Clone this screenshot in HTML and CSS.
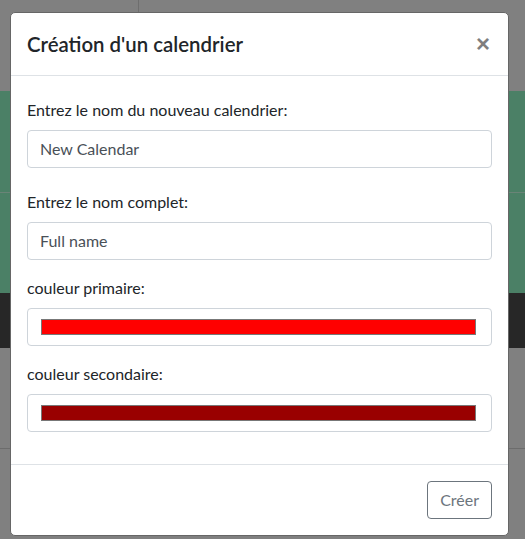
FILE: index.html
```html
<!DOCTYPE html>
<html lang="fr">
<head>
<meta charset="utf-8">
<title>Création d'un calendrier</title>
<link rel="stylesheet" href="styles.css">
</head>
<body>
<div class="page">
  <div class="topbar"><div class="topbar-cell"></div></div>
  <div class="band-green"><div class="green-row"></div><div class="green-row"></div></div>
  <div class="band-dark"></div>
  <div class="band-lower"></div>
</div>

<div class="modal">
  <div class="modal-header">
    <h5 class="modal-title">Création d'un calendrier</h5>
    <button class="close" type="button" aria-label="Close">×</button>
  </div>
  <div class="modal-body">
    <div class="form-group spaced">
      <label class="form-label">Entrez le nom du nouveau calendrier:</label>
      <div class="form-control">New Calendar</div>
    </div>
    <div class="form-group spaced">
      <label class="form-label">Entrez le nom complet:</label>
      <div class="form-control">Full name</div>
    </div>
    <div class="form-group">
      <label class="form-label">couleur primaire:</label>
      <div class="form-control color-control"><span class="swatch swatch-primary"></span></div>
    </div>
    <div class="form-group">
      <label class="form-label">couleur secondaire:</label>
      <div class="form-control color-control"><span class="swatch swatch-secondary"></span></div>
    </div>
  </div>
  <div class="modal-footer">
    <button class="btn btn-outline-secondary" type="button">Créer</button>
  </div>
</div>
</body>
</html>
```

FILE: styles.css
```css
* { box-sizing: border-box; }

html, body {
  margin: 0;
  padding: 0;
  width: 525px;
  height: 539px;
  overflow: hidden;
  background: #808080;
  font-family: "Lato", "Open Sans", sans-serif;
}

.page {
  display: flex;
  flex-direction: column;
  height: 539px;
}

.topbar {
  height: 91px;
  background: #808080;
  display: flex;
}
.topbar-cell {
  width: 139px;
  border-right: 1px solid #6e6e6e;
}

.band-green {
  height: 202px;
  background: #4b8066;
  display: flex;
  flex-direction: column;
}
.green-row {
  flex: 1;
}
.green-row + .green-row {
  border-top: 1px solid #6a8477;
}

.band-dark {
  height: 55px;
  background: #272727;
}

.band-lower {
  height: 101px;
  border-bottom: 1px solid #6c6c6c;
  background: #808080;
}

/* modal */
.modal {
  position: absolute;
  left: 10px;
  top: 12px;
  width: 499px;
  background: #fff;
  border: 1px solid #666;
  border-radius: 5px;
  color: #212529;
  display: flex;
  flex-direction: column;
}

.modal-header {
  display: flex;
  align-items: flex-start;
  padding: 16px;
  border-bottom: 1px solid #dee2e6;
}
.modal-title {
  margin: 0;
  font-size: 20.4px;
  font-weight: 600;
  line-height: 30px;
  color: #212529;
}
.close {
  margin-left: auto;
  border: 0;
  background: transparent;
  padding: 0 2px 0 0;
  font-family: "Liberation Sans", sans-serif;
  font-size: 24px;
  font-weight: 700;
  line-height: 30px;
  color: #000;
  opacity: 0.5;
}

.modal-body {
  padding: 16px;
  display: flex;
  flex-direction: column;
}

.form-group {
  display: flex;
  flex-direction: column;
  margin-bottom: 16px;
}
.form-group.spaced {
  padding-top: 6px;
}
.form-label {
  font-size: 16px;
  line-height: 24px;
  margin-bottom: 8px;
  color: #212529;
}
.form-control {
  height: 38px;
  padding: 6px 12px;
  border: 1px solid #ced4da;
  border-radius: 4px;
  font-size: 16px;
  line-height: 24px;
  color: #495057;
}
.color-control {
  padding: 10px 15px 10px 13px;
  display: flex;
}
.swatch {
  flex: 1;
  height: 16px;
  border: 1px solid #777;
}
.swatch-primary { background: #ff0000; }
.swatch-secondary { background: #990000; }

.modal-footer {
  display: flex;
  justify-content: flex-end;
  padding: 12px;
  border-top: 1px solid #dee2e6;
}
.btn {
  margin: 4px;
  height: 38px;
  padding: 6px 12px;
  font-family: inherit;
  font-size: 16px;
  line-height: 24px;
  border-radius: 4px;
  background: #fff;
}
.btn-outline-secondary {
  color: #6c757d;
  border: 1px solid #6c757d;
}
```
